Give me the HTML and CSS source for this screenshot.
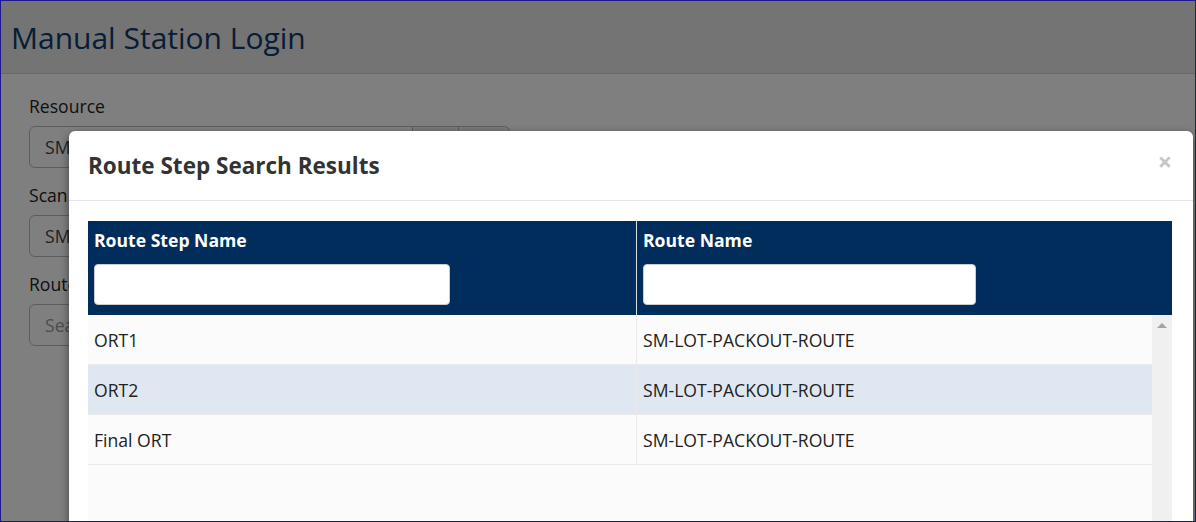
FILE: index.html
```html
<!DOCTYPE html>
<html>
<head>
<meta charset="utf-8">
<link rel="stylesheet" href="styles.css">
</head>
<body>
<div class="frame">
  <div class="page">
    <header class="page-header"><h1>Manual Station Login</h1></header>
    <form class="form">
      <div class="group">
        <label>Resource</label>
        <div class="input-row">
          <div class="field">SM-RESOURCE-01</div>
          <div class="addon"></div>
          <div class="addon last"></div>
        </div>
      </div>
      <div class="group">
        <label>Scan</label>
        <div class="input-row"><div class="field wide">SM-LOT</div></div>
      </div>
      <div class="group">
        <label>Route Step</label>
        <div class="input-row"><div class="field wide placeholder">Search</div></div>
      </div>
    </form>
  </div>
  <div class="overlay"></div>
  <div class="modal">
    <div class="modal-header">
      <h2>Route Step Search Results</h2>
      <span class="close">×</span>
    </div>
    <div class="modal-body">
      <div class="grid">
        <div class="grid-head">
          <div class="hcell">
            <div class="htitle">Route Step Name</div>
            <div class="hinput first"></div>
          </div>
          <div class="hcell">
            <div class="htitle">Route Name</div>
            <div class="hinput second"></div>
          </div>
        </div>
        <div class="grid-body">
          <div class="rows">
            <div class="row"><div class="cell">ORT1</div><div class="cell">SM-LOT-PACKOUT-ROUTE</div></div>
            <div class="row alt"><div class="cell">ORT2</div><div class="cell">SM-LOT-PACKOUT-ROUTE</div></div>
            <div class="row"><div class="cell">Final ORT</div><div class="cell">SM-LOT-PACKOUT-ROUTE</div></div>
          </div>
          <div class="scrollbar"><span class="arrow"></span></div>
        </div>
      </div>
    </div>
  </div>
</div>
</body>
</html>
```
FILE: styles.css
```css
html, body { margin: 0; padding: 0; }
body { font-family: "Open Sans", "Noto Sans", sans-serif; background: #fff; }
.frame {
  position: relative;
  width: 1196px;
  height: 522px;
  box-sizing: border-box;
  border: 1px solid #1a1a8e;
  overflow: hidden;
  background: #fff;
}
.page-header {
  height: 72px;
  background: #e8e9ea;
  border-bottom: 1px solid #d2d2d2;
  display: flex;
  align-items: center;
  padding-left: 10px;
}
.page-header h1 {
  margin: 0;
  font-weight: 400;
  font-size: 30px;
  color: #0e3a6a;
}
.form { padding: 19px 28px 0; }
.group { margin-bottom: 14px; }
.group label { display: block; font-size: 17.6px; color: #222; margin-bottom: 7px; line-height: 26px; }
.input-row { display: flex; height: 42px; }
.field {
  width: 384px;
  box-sizing: border-box;
  border: 1px solid #bbb;
  border-radius: 6px 0 0 6px;
  background: #fff;
  color: #444;
  font-size: 17.6px;
  padding: 8px 15px;
}
.field.wide { width: 481px; border-radius: 6px; }
.field.placeholder { color: #999; }
.addon { width: 46px; border: 1px solid #bbb; border-left: none; box-sizing: border-box; background: #f4f4f4; }
.addon.last { width: 51px; border-radius: 0 6px 6px 0; }
.overlay { position: absolute; inset: 0; background: rgba(0,0,0,0.5); }
.modal {
  position: absolute;
  left: 68px;
  top: 130px;
  width: 1124px;
  height: 420px;
  box-sizing: border-box;
  background: #fff;
  border-radius: 6px;
  box-shadow: 0 3px 9px rgba(0,0,0,0.5);
}
.modal-header {
  height: 70px;
  box-sizing: border-box;
  border-bottom: 1px solid #e5e5e5;
  display: flex;
  align-items: center;
  justify-content: space-between;
  padding: 0 21px 0 19px;
}
.modal-header h2 { margin: 0; font-size: 22.5px; font-weight: 700; color: #333; }
.close { font-size: 25px; font-weight: 700; color: #c6c6c6; line-height: 1; margin-top: -8px; }
.modal-body { padding: 20px 20px 0 19px; }
.grid { width: 1084px; }
.grid-head { display: flex; background: #002d5c; height: 94px; }
.hcell { padding: 8px 6px 0; box-sizing: border-box; }
.hcell:first-child { width: 549px; border-right: 1px solid #d8dde4; }
.hcell:last-child { flex: 1; }
.htitle { color: #fff; font-weight: 700; font-size: 17.6px; line-height: 22px; margin-bottom: 13px; }
.hinput { height: 41px; background: #fff; border: 1px solid #ccc; border-radius: 4px; box-sizing: border-box; }
.hinput.first { width: 356px; }
.hinput.second { width: 333px; }
.grid-body { display: flex; background: #fbfbfb; height: 240px; }
.rows { width: 1064px; }
.row { display: flex; height: 50px; border-bottom: 1px solid #eaeaea; box-sizing: border-box; }
.row.alt { background: #dfe8f2; }
.cell { font-size: 17.6px; color: #222; display: flex; align-items: center; padding-left: 6px; box-sizing: border-box; }
.cell:first-child { width: 549px; border-right: 1px solid #eaeaea; }
.cell:last-child { flex: 1; }
.scrollbar { width: 20px; background: #f0f0f0; position: relative; }
.arrow {
  position: absolute; left: 5px; top: 8px;
  width: 0; height: 0;
  border-left: 5px solid transparent; border-right: 5px solid transparent;
  border-bottom: 5px solid #a3a3a3;
}
```
